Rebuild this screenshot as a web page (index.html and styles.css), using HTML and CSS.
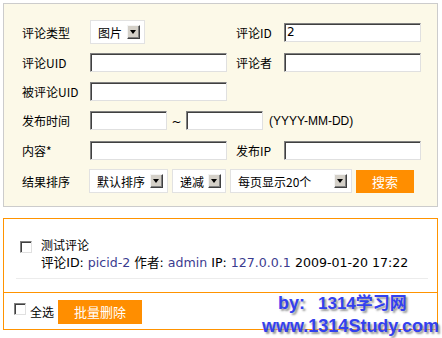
FILE: index.html
```html
<!DOCTYPE html>
<html lang="zh-CN">
<head>
    <meta charset="UTF-8">
    <title>评论管理</title>
    <link rel="stylesheet" href="styles.css">
</head>
<body>
    <form class="search">
        <div class="grid">
            <label class="lbl">评论类型</label>
            <div class="field">
                <span class="select w-type">图片<i class="arrow"></i></span>
            </div>
            <label class="lbl">评论ID</label>
            <div class="field"><input class="text" type="text" value="2"></div>

            <label class="lbl">评论UID</label>
            <div class="field"><input class="text" type="text"></div>
            <label class="lbl">评论者</label>
            <div class="field"><input class="text" type="text"></div>

            <label class="lbl">被评论UID</label>
            <div class="field wide"><input class="text" type="text"></div>

            <label class="lbl">发布时间</label>
            <div class="field wide">
                <input class="text short" type="text">
                <span class="tilde">~</span>
                <input class="text short" type="text">
                <span class="hint">(YYYY-MM-DD)</span>
            </div>

            <label class="lbl">内容*</label>
            <div class="field"><input class="text" type="text"></div>
            <label class="lbl">发布IP</label>
            <div class="field"><input class="text" type="text"></div>

            <label class="lbl">结果排序</label>
            <div class="field wide row-sort">
                <span class="select w-order">默认排序<i class="arrow"></i></span>
                <span class="select w-dir">递减<i class="arrow"></i></span>
                <span class="select w-page">每页显示20个<i class="arrow"></i></span>
                <button type="button" class="btn btn-search">搜索</button>
            </div>
        </div>
    </form>

    <div class="results">
        <ul class="list">
            <li class="item">
                <input type="checkbox" class="chk">
                <div class="info">
                    <div class="title">测试评论</div>
                    <div class="meta">评论ID: <a href="#">picid-2</a> 作者: <a href="#">admin</a> IP: <a href="#">127.0.0.1</a> 2009-01-20 17:22</div>
                </div>
            </li>
        </ul>
        <div class="footer">
            <input type="checkbox" class="chk">
            <span class="all">全选</span>
            <button type="button" class="btn btn-del">批量删除</button>
        </div>
    </div>

    <div class="watermark">
        <div class="wm-by"><span class="wm-pre">by:</span><span class="wm-name">1314学习网</span></div>
        <div class="wm-url">www.1314Study.com</div>
    </div>
</body>
</html>
```

FILE: styles.css
```css
body {
    margin: 0;
    font-family: "DejaVu Sans", "Noto Sans CJK SC", sans-serif;
    font-size: 12px;
    color: #000;
    background: #fff;
    position: relative;
    height: 338px;
    overflow: hidden;
}
.search {
    margin: 3px 0 0 3px;
    width: 435px;
    height: 204px;
    box-sizing: border-box;
    border: 1px solid #ccc;
    background: #fcf9e8;
    padding: 13px 0 0 18px;
}
.grid {
    display: grid;
    grid-template-columns: 68px 146px 48px 137px;
    grid-template-rows: 30px 30px 29px 29px 31px 30px;
    align-items: center;
}
.lbl {
    font-family: "Noto Sans CJK SC", sans-serif;
    font-size: 12px;
    white-space: nowrap;
}
.field {
    display: flex;
    align-items: center;
}
.wide {
    grid-column: 2 / 5;
}
.text {
    width: 137px;
    height: 19px;
    box-sizing: border-box;
    margin: 0;
    padding: 0 2px;
    border: 1px solid;
    border-color: #808080 #e0e0e0 #e0e0e0 #808080;
    box-shadow: inset 1px 1px 0 #404040;
    background: #fff;
    font-family: "DejaVu Sans", sans-serif;
    font-size: 12px;
    outline: none;
}
.text.short {
    width: 77px;
}
.tilde {
    width: 19px;
    text-align: center;
    font-size: 12px;
    padding-top: 2px;
}
.hint {
    margin-left: 6px;
    font-family: "Liberation Sans", sans-serif;
    font-size: 12px;
}
.select {
    display: inline-flex;
    align-items: center;
    justify-content: space-between;
    height: 24px;
    box-sizing: border-box;
    border: 1px solid #e2e2e2;
    background: #fff;
    padding: 0 4px 0 7px;
    font-family: "Noto Sans CJK SC", sans-serif;
    white-space: nowrap;
}
.w-type { width: 55px; }
.w-order { width: 79px; margin-left: -1px; }
.w-dir { width: 54px; }
.w-page { width: 122px; }
.arrow {
    position: relative;
    width: 13px;
    height: 14px;
    box-sizing: border-box;
    background: #d4d0c8;
    border: 1px solid;
    border-color: #f4f4f4 #404040 #404040 #f4f4f4;
    box-shadow: inset -1px -1px 0 #808080;
}
.arrow::after {
    content: "";
    position: absolute;
    left: 2px;
    top: 4px;
    border-left: 3px solid transparent;
    border-right: 3px solid transparent;
    border-top: 4px solid #000;
}
.row-sort {
    gap: 4px;
}
.btn {
    border: 0;
    background: #ff8e00;
    color: #fff;
    font-family: "Noto Sans CJK SC", sans-serif;
    font-size: 13px;
    padding: 0;
    cursor: pointer;
}
.btn-search {
    width: 58px;
    height: 23px;
}
.results {
    margin: 11px 0 0 3px;
    width: 435px;
    height: 112px;
    box-sizing: border-box;
    border: 1px solid #ff9300;
}
.list {
    list-style: none;
    margin: 0;
    padding: 0 9px 0 12px;
    height: 73px;
    border-bottom: 1px solid #ff9300;
    box-sizing: content-box;
}
.item {
    display: flex;
    padding: 17px 0 6px 4px;
    border-bottom: 1px solid #ececec;
}
.chk {
    appearance: none;
    -webkit-appearance: none;
    width: 12px;
    height: 12px;
    margin: 0;
    box-sizing: border-box;
    border: 1px solid;
    border-color: #808080 #e0e0e0 #e0e0e0 #808080;
    box-shadow: inset 1px 1px 0 #404040;
    background: #fff;
    flex: none;
}
.item .chk {
    margin: 5px 9px 0 0;
}
.title, .meta {
    line-height: 18px;
}
.title {
    font-family: "Noto Sans CJK SC", sans-serif;
}
.meta {
    font-size: 12.6px;
}
.meta a {
    color: #3b3b8f;
    text-decoration: none;
}
.footer {
    display: flex;
    align-items: center;
    height: 36px;
    padding-left: 10px;
}
.footer .chk {
    margin-top: -5px;
}
.all {
    margin-left: 4px;
    font-family: "Noto Sans CJK SC", sans-serif;
}
.btn-del {
    margin-left: 4px;
    width: 84px;
    height: 24px;
    margin-top: 1px;
}
.watermark {
    position: absolute;
    left: 262px;
    top: 292px;
    font-family: "Liberation Sans", "Noto Sans CJK SC", sans-serif;
    font-weight: bold;
    font-size: 18px;
    line-height: 23px;
    color: #3340ee;
    text-shadow: 2px 2px 2px #999;
    white-space: nowrap;
}
.wm-by {
    display: flex;
    padding-left: 16px;
}
.wm-pre {
    width: 40px;
}
.wm-name {
    font-size: 17px;
}
```
